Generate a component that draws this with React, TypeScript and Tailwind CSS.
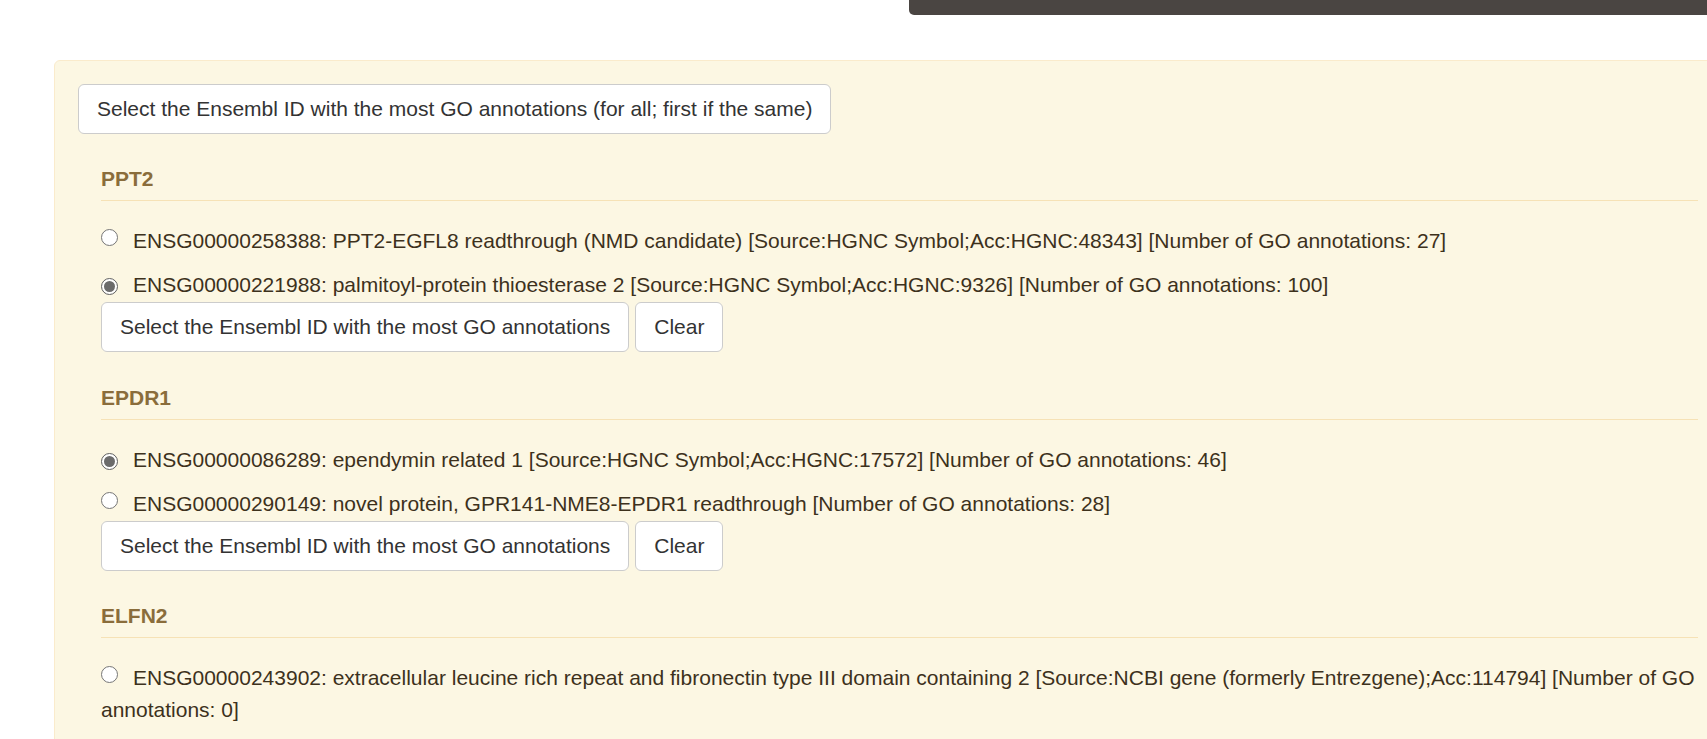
import React from "react";

type Option = { id: string; text: string; checked?: boolean };
type Gene = { symbol: string; options: Option[] };

const genes: Gene[] = [
  {
    symbol: "PPT2",
    options: [
      {
        id: "ENSG00000258388",
        text: "PPT2-EGFL8 readthrough (NMD candidate) [Source:HGNC Symbol;Acc:HGNC:48343] [Number of GO annotations: 27]",
      },
      {
        id: "ENSG00000221988",
        text: "palmitoyl-protein thioesterase 2 [Source:HGNC Symbol;Acc:HGNC:9326] [Number of GO annotations: 100]",
        checked: true,
      },
    ],
  },
  {
    symbol: "EPDR1",
    options: [
      {
        id: "ENSG00000086289",
        text: "ependymin related 1 [Source:HGNC Symbol;Acc:HGNC:17572] [Number of GO annotations: 46]",
        checked: true,
      },
      {
        id: "ENSG00000290149",
        text: "novel protein, GPR141-NME8-EPDR1 readthrough [Number of GO annotations: 28]",
      },
    ],
  },
  {
    symbol: "ELFN2",
    options: [
      {
        id: "ENSG00000243902",
        text: "extracellular leucine rich repeat and fibronectin type III domain containing 2 [Source:NCBI gene (formerly Entrezgene);Acc:114794] [Number of GO annotations: 0]",
      },
      {
        id: "ENSG00000166897",
        text: "extracellular leucine rich repeat and fibronectin type III domain containing 2 [Source:HGNC Symbol;Acc:HGNC:29396] [Number of GO annotations: 12]",
      },
    ],
  },
];

function Radio({ checked }: { checked?: boolean }) {
  return (
    <span
      className={`mb-[2px] mr-[15px] inline-flex h-[17px] w-[17px] items-center justify-center rounded-full border align-baseline ${
        checked ? "border-[#5f5f5f] bg-white" : "border-[#767676] bg-white"
      }`}
    >
      {checked && <span className="h-[11px] w-[11px] rounded-full bg-[#6b6b6b]" />}
    </span>
  );
}

function Btn({ children }: { children: React.ReactNode }) {
  return (
    <button className="h-[50px] rounded-[6px] border border-[#ccc] bg-white px-[18px] text-[21px] leading-[30px] text-[#333]">
      {children}
    </button>
  );
}

export default function App() {
  return (
    <div
      className="h-screen w-full overflow-hidden bg-white"
      style={{ fontFamily: '"Liberation Sans", Arial, sans-serif' }}
    >
      <div className="flex justify-end">
        <div className="h-[15px] w-[798px] rounded-bl-[5px] bg-[#4a4542]" />
      </div>

      <div className="ml-[54px] mt-[45px] w-[1668px] rounded-[6px] border border-[#faebcc] bg-[#fcf7e3] p-[23px]">
        <Btn>Select the Ensembl ID with the most GO annotations (for all; first if the same)</Btn>

        <div className="pl-[23px]">
          {genes.map((g, i) => (
            <section key={g.symbol} className={i === 0 ? "mt-[30px]" : "mt-[30.5px]"}>
              <h4 className="border-b border-[#f6e2b6] pb-[6px] text-[21px] font-bold leading-[30px] text-[#8a6d3b]">
                {g.symbol}
              </h4>
              <div className="mt-[24px] flex flex-col gap-[12.5px]">
                {g.options.map((o) => (
                  <label key={o.id} className="block text-[21px] leading-[31.5px] text-[#3d311c]">
                    <Radio checked={o.checked} />
                    {o.id}: {o.text}
                  </label>
                ))}
              </div>
              <div className="mt-[1.5px] flex gap-[6px]">
                <Btn>Select the Ensembl ID with the most GO annotations</Btn>
                <Btn>Clear</Btn>
              </div>
            </section>
          ))}
        </div>
      </div>
    </div>
  );
}
